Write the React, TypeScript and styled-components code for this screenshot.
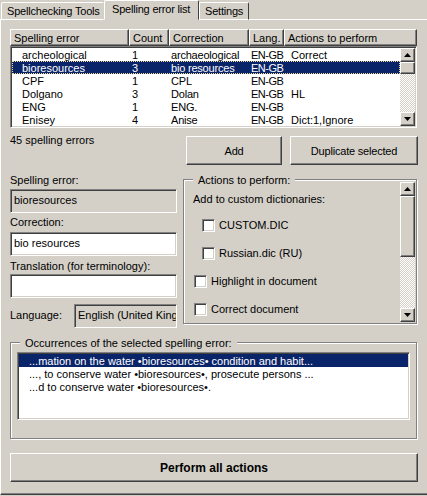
import React from "react";
import styled, { createGlobalStyle, css } from "styled-components";

const Global = createGlobalStyle`
  html, body { margin: 0; padding: 0; background: #d4d0c8; }
  body { width: 427px; height: 496px; overflow: hidden; font: 11px/13px "Liberation Sans", Tahoma, sans-serif; color: #000; }
`;
const raised = css`
  background: #d4d0c8;
  border: 1px solid; border-color: #fff #404040 #404040 #fff;
  box-shadow: inset -1px -1px 0 #808080;
`;
const sunken = css`
  border: 1px solid; border-color: #808080 #fff #fff #808080;
  box-shadow: inset 1px 1px 0 #404040, inset -1px -1px 0 #d4d0c8;
`;
const Window = styled.div`
  width: 427px; height: 496px; box-sizing: border-box; padding-bottom: 1px; display: flex; flex-direction: column; background: #d4d0c8;
`;
const TabStrip = styled.div`display: flex; align-items: flex-end; height: 20px; padding-left: 1px; position: relative; z-index: 1; margin-bottom: -1px;`;
const Tab = styled.div<{ $active?: boolean; $flat?: boolean; $w: number }>`
  box-sizing: border-box; width: ${(p) => p.$w}px; background: #d4d0c8; flex: none;
  border: 1px solid; border-color: #fff #404040 transparent #fff;
  border-radius: 2px 2px 0 0; white-space: nowrap; line-height: 14px; letter-spacing: -0.2px;
  ${(p) => p.$active ? css`
    height: 20px; padding: 1px 0 0 7px; z-index: 2; border-bottom-color: #d4d0c8;
  ` : css`
    height: 18px; padding: 1px 0 0 5px; border-bottom-color: #fff;
  `}
  ${(p) => p.$flat && "border-right-color: transparent;"}
`;
const Panel = styled.div`
  flex: 1; box-sizing: border-box; border: 1px solid; border-color: #fff transparent #404040 #fff; border-right-width: 0;
  box-shadow: inset 0 -1px 0 #808080;
  padding: 9px 9px 12px 9px; display: flex; flex-direction: column;
`;
const Table = styled.div`width: 407px; display: flex; flex-direction: column;`;
const HeaderRow = styled.div`display: flex; height: 17px; flex: none;`;
const HeaderCell = styled.div<{ $w: number }>`
  ${raised}; box-sizing: border-box; width: ${(p) => p.$w}px; flex: none; padding: 1px 0 0 3px; line-height: 14px; white-space: nowrap; overflow: hidden;
`;
const TableBody = styled.div`${sunken}; box-sizing: border-box; height: 82px; background: #fff; padding: 1px; display: flex;`;
const Rows = styled.div`width: 388px; flex: none; overflow: hidden;`;
const Row = styled.div<{ $sel?: boolean }>`
  display: flex; height: 13px; line-height: 15px; white-space: nowrap;
  ${(p) => p.$sel && css`background: #0a246a; color: #fff; outline: 1px dotted #f5db95; outline-offset: -1px;`}
`;
const Cell = styled.div<{ $w: number; $pad: number; $ls: number }>`
  width: ${(p) => p.$w}px; flex: none; box-sizing: border-box; padding-left: ${(p) => p.$pad}px; letter-spacing: ${(p) => p.$ls}px;
`;
const Scrollbar = styled.div`
  width: 15px; flex: none; display: flex; flex-direction: column;
  background: repeating-conic-gradient(#d4d0c8 0 25%, #fff 0 50%) 0 0 / 2px 2px;
`;
const ScrollButton = styled.div`
  ${raised}; box-sizing: border-box; height: 14px; flex: none; display: flex; align-items: center; justify-content: center;
`;
const Thumb = styled.div<{ $h: number }>`${raised}; box-sizing: border-box; height: ${(p) => p.$h}px; flex: none;`;
const Track = styled.div`flex: 1;`;
const Toolbar = styled.div`display: flex; height: 29px; margin-top: 8px; align-items: flex-start;`;
const Count = styled.div`flex: 1; margin-top: -3px; line-height: 14px;`;
const Button = styled.button<{ $w?: number; $bold?: boolean }>`
  ${raised}; box-sizing: border-box; padding: 2px 0 0; font: inherit; color: #000; letter-spacing: -0.2px;
  height: 29px; width: ${(p) => p.$w ? `${p.$w}px` : "100%"}; flex: none;
  ${(p) => p.$bold && "font-weight: 700; font-size: 12px; letter-spacing: 0;"}
`;
const Gap = styled.div`width: 8px;`;
const Middle = styled.div`display: flex; margin-top: 8px; height: 155px; gap: 6px;`;
const Fields = styled.div`width: 167px; flex: none; display: flex; flex-direction: column;`;
const FieldLabel = styled.label<{ $mb: number }>`display: block; height: 14px; line-height: 14px; margin-bottom: ${(p) => p.$mb}px;`;
const Input = styled.div<{ $ro?: boolean; $mb?: number }>`
  ${sunken}; box-sizing: border-box; height: 24px; line-height: 20px; padding-left: 3px; white-space: nowrap; overflow: hidden;
  margin-bottom: ${(p) => p.$mb ?? 0}px;
  background: ${(p) => (p.$ro ? "#d4d0c8" : "#fff")};
`;
const LangRow = styled.div`display: flex; align-items: center;`;
const LangLabel = styled.div`width: 64px; flex: none; padding-bottom: 2px;`;
const LangInput = styled(Input)`flex: 1; min-width: 0;`;
const Group = styled.div`
  position: relative; box-sizing: border-box; border: 1px solid #808080; box-shadow: 1px 1px 0 #fff, inset 1px 1px 0 #fff;
`;
const ActionsGroup = styled(Group)`width: 234px; height: 145px; flex: none; margin-top: 6px; display: flex; padding: 2px 0 0 9px;`;
const Legend = styled.div`
  position: absolute; top: -7px; left: 9px; padding: 0 5px; line-height: 14px; height: 14px; background: #d4d0c8; white-space: nowrap;
`;
const Actions = styled.div`flex: 1; min-height: 0; overflow: hidden; display: flex; flex-direction: column; padding-top: 10px;`;
const AddTo = styled.div`height: 14px; flex: none; line-height: 14px; margin-bottom: 12px;`;
const Check = styled.div<{ $indent?: boolean }>`
  display: flex; flex: none; align-items: center; height: 14px; margin-bottom: 14px; gap: 4px; line-height: 15px; margin-left: ${(p) => (p.$indent ? "9px" : "1px")};
`;
const Box = styled.span`${sunken}; box-sizing: border-box; width: 13px; height: 13px; background: #fff; flex: none;`;
const ActionsScroll = styled(Scrollbar)`height: 140px; margin-right: 1px;`;
const OccGroup = styled(Group)`width: 407px; height: 97px; margin-top: 14px; padding: 9px 6px 0;`;
const OccList = styled.div`${sunken}; box-sizing: border-box; height: 68px; background: #fff; padding: 1px;`;
const OccRow = styled.div<{ $sel?: boolean }>`
  height: 13px; line-height: 15px; padding-left: 10px; white-space: nowrap;
  ${(p) => p.$sel && css`background: #0a246a; color: #fff;`}
`;
const BottomBar = styled.div`margin-top: 14px;`;

const UpArrow = () => <svg width="7" height="4" viewBox="0 0 7 4"><path d="M3.5 0 7 4H0z" /></svg>;
const DownArrow = () => <svg width="7" height="4" viewBox="0 0 7 4"><path d="M0 0h7L3.5 4z" /></svg>;

const columns = [
  { w: 117, pad: 10, ls: 0 }, { w: 40, pad: 3, ls: 0 }, { w: 80, pad: 2, ls: -0.2 }, { w: 35, pad: 2, ls: -0.5 }, { w: 116, pad: 7, ls: 0 },
];
const headers = [["Spelling error", 119], ["Count", 40], ["Correction", 80], ["Lang.", 35], ["Actions to perform", 133]] as const;
const rows = [
  ["archeological", "1", "archaeological", "EN-GB", "Correct"],
  ["bioresources", "3", "bio resources", "EN-GB", ""],
  ["CPF", "1", "CPL", "EN-GB", ""],
  ["Dolgano", "3", "Dolan", "EN-GB", "HL"],
  ["ENG", "1", "ENG.", "EN-GB", ""],
  ["Enisey", "4", "Anise", "EN-GB", "Dict:1,Ignore"],
];

export default function App() {
  return (
    <Window>
      <Global />
      <TabStrip>
        <Tab $w={103} $flat>Spellchecking Tools</Tab>
        <Tab $active $w={95}>Spelling error list</Tab>
        <Tab $w={50}>Settings</Tab>
      </TabStrip>
      <Panel>
        <Table>
          <HeaderRow>
            {headers.map(([t, w]) => <HeaderCell key={t} $w={w}>{t}</HeaderCell>)}
          </HeaderRow>
          <TableBody>
            <Rows>
              {rows.map((r, i) => (
                <Row key={i} $sel={i === 1}>
                  {r.map((c, j) => <Cell key={j} $w={columns[j].w} $pad={columns[j].pad} $ls={columns[j].ls}>{c}</Cell>)}
                </Row>
              ))}
            </Rows>
            <Scrollbar>
              <ScrollButton><UpArrow /></ScrollButton>
              <Thumb $h={12} />
              <Track />
              <ScrollButton><DownArrow /></ScrollButton>
            </Scrollbar>
          </TableBody>
        </Table>
        <Toolbar>
          <Count>45 spelling errors</Count>
          <Button $w={96}>Add</Button>
          <Gap />
          <Button $w={128}>Duplicate selected</Button>
        </Toolbar>
        <Middle>
          <Fields>
            <FieldLabel $mb={2}>Spelling error:</FieldLabel>
            <Input $ro $mb={2}>bioresources</Input>
            <FieldLabel $mb={3}>Correction:</FieldLabel>
            <Input $mb={3}>bio resources</Input>
            <FieldLabel $mb={1}>Translation (for terminology):</FieldLabel>
            <Input $mb={6} />
            <LangRow>
              <LangLabel>Language:</LangLabel>
              <LangInput $ro>English (United Kingdom)</LangInput>
            </LangRow>
          </Fields>
          <ActionsGroup>
            <Legend>Actions to perform:</Legend>
            <Actions>
              <AddTo>Add to custom dictionaries:</AddTo>
              <Check $indent><Box />CUSTOM.DIC</Check>
              <Check $indent><Box />Russian.dic (RU)</Check>
              <Check><Box />Highlight in document</Check>
              <Check><Box />Correct document</Check>
            </Actions>
            <ActionsScroll>
              <ScrollButton><UpArrow /></ScrollButton>
              <Thumb $h={61} />
              <Track />
              <ScrollButton><DownArrow /></ScrollButton>
            </ActionsScroll>
          </ActionsGroup>
        </Middle>
        <OccGroup>
          <Legend>Occurrences of the selected spelling error:</Legend>
          <OccList>
            <OccRow $sel>...mation on the water •bioresources• condition and habit...</OccRow>
            <OccRow>..., to conserve water •bioresources•, prosecute persons ...</OccRow>
            <OccRow>...d to conserve water •bioresources•.</OccRow>
          </OccList>
        </OccGroup>
        <BottomBar><Button $bold>Perform all actions</Button></BottomBar>
      </Panel>
    </Window>
  );
}
